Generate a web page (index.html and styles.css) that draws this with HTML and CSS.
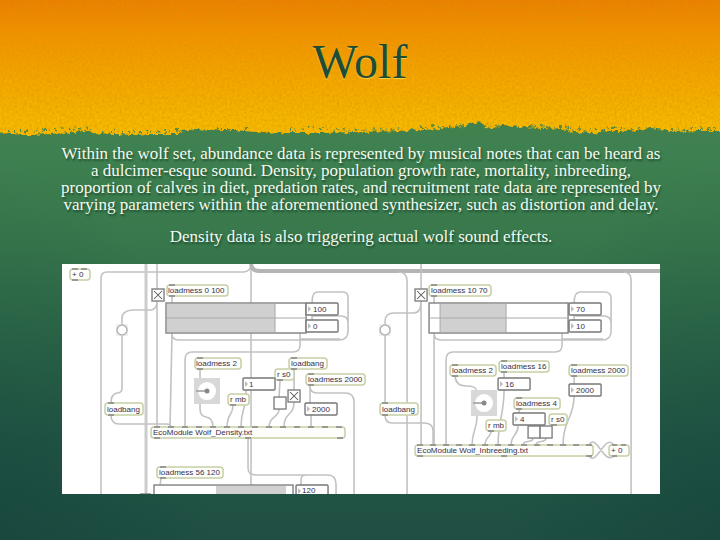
FILE: index.html
```html
<!DOCTYPE html>
<html lang="en">
<head>
<meta charset="utf-8">
<title>Wolf</title>
<link rel="stylesheet" href="styles.css">
</head>
<body>
<main class="slide">
  <header class="banner">
    <svg class="grain" aria-hidden="true">
      <filter id="weave" x="0" y="0" width="100%" height="100%">
        <feTurbulence type="fractalNoise" baseFrequency="0.4 0.36" numOctaves="3" seed="4"/>
        <feColorMatrix values="0 0 0 0 0.7  0 0 0 0 0.3  0 0 0 0 0  1.8 0 0 0 -0.66"/>
      </filter>
      <rect width="100%" height="100%" filter="url(#weave)"/>
    </svg>
    <h1 class="title">Wolf</h1>
    <svg class="torn" viewBox="0 116 720 24" preserveAspectRatio="none" aria-hidden="true">
      <filter id="rough" x="0" y="-20%" width="100%" height="140%">
        <feTurbulence type="fractalNoise" baseFrequency="0.22" numOctaves="3" seed="9"/>
        <feDisplacementMap in="SourceGraphic" scale="7" xChannelSelector="R" yChannelSelector="G"/>
      </filter>
      <g filter="url(#rough)">
        <path class="torn-fill" d="M-9 148V133L10 134 30 135 50 134 62 133 85 131 100 133 130 135 150 134 175 134 183 131 195 129 215 130 235 130 255 132 275 134 290 133 320 133 360 132 400 131 440 129 455 127 465 126 475 123 479 121 484 126 490 130 500 126 505 125 520 127 545 128 560 129 575 132 595 133 605 131 620 131 640 130 650 128 665 130 675 132 700 131 729 131V148Z"/>
        <path class="specks" d="M-4 131H22L48 130 70 128 92 129M110 131L140 132 178 131M216 129L252 129M290 130L310 127 350 130 400 129M420 128L450 126 468 124M485 124L500 126M530 126L560 127 585 130 610 128 640 128M672 130L700 128 724 130"/>
      </g>
    </svg>
  </header>
  <section class="content">
    <p class="copy">Within the wolf set, abundance data is represented by musical notes that can be heard as<br>a dulcimer-esque sound. Density, population growth rate, mortality, inbreeding,<br>proportion of calves in diet, predation rates, and recruitment rate data are represented by<br>varying parameters within the aforementioned synthesizer, such as distortion and delay.</p>
    <p class="copy">Density data is also triggering actual wolf sound effects.</p>
    <svg class="patch" viewBox="62 264 598 230" role="img" aria-label="Wolf density and inbreeding patch">
      <defs>
        <g id="cross"><rect class="toggle" width="12" height="12"/><path class="ink" d="M2 2L10 10M10 2L2 10"/></g>
        <g id="dial"><rect class="dial-bg" width="26" height="26"/><circle class="dial-face" cx="13" cy="13" r="9"/><path class="dial-hand" d="M2 13H13"/><circle class="dial-dot" cx="13" cy="13" r="2.5"/></g>
        <g id="bang"><rect class="bang-bg" x="-6" y="-6" width="12" height="12"/><circle class="bang-ring" r="5"/></g>
        <g id="num"><rect class="number" width="32" height="12" rx="1"/><path class="arrow" d="M2 3L5 6 2 9Z"/></g>
      </defs>
      <g class="cords">
        <path d="M101 494V278Q101 272 107 272H244Q251 271 251 264V485"/>
        <path class="thick" d="M146 264V494"/>
        <path class="trunk" d="M251 264Q252 271 259 271H660"/>
        <path d="M157 264V427M157 301Q157 310 150 310H132Q122 311 122 318V388Q122 393 117 393 111 394 111 403M111 415Q111 424 119 424H166Q171 424 171 427"/>
        <path d="M172 295V303M172 333L170 427M172 333Q172 340 178 340H339Q348 340 348 331V297Q348 292 342 292H317Q312 292 312 303M312 320V316H341Q348 316 348 323M300 333V345Q300 352 293 352H192Q185 352 185 360V427M300 339H340"/>
        <path d="M200 368V378M200 404V409Q200 416 206 417 213 418 213 427M233 405C233 416 227 413 227 427M246 390C246 412 241 408 241 427M280 380L279 397M279 409C279 418 269 416 269 427M294 368V390M294 402C294 416 284 412 284 427M310 385V403M310 386Q310 393 317 393H345Q354 393 354 402V494M311 415V427"/>
        <path d="M248 438V468Q248 475 256 475H328Q336 475 336 485V494M301 485V480Q301 475 306 475M161 478L160 485"/>
        <path d="M398 272Q407 272 407 281V494M421 264V445M421 301Q421 313 414 313H394Q385 313 385 321V403M385 415Q385 423 392 423H424Q433 423 433 431V445"/>
        <path d="M434 295V303M434 333V445M434 333Q434 340 441 340H602Q611 340 611 331V298Q611 292 604 292H580Q574 292 574 303M574 320V316H604Q611 316 611 324M562 333V345Q562 352 555 352H453Q446 352 446 360V445M562 339H603M623 272Q631 272 631 280V494"/>
        <path d="M455 375Q455 386 466 386 476 386 476 390M477 416C477 430 472 430 472 445M504 372V390C504 415 498 420 498 445M491 431C491 438 485 436 485 445M519 408V413M518 426C518 436 511 434 511 445M533 438C533 444 523 439 523 445M546 438C546 444 536 439 536 445M574 376V396C574 418 563 420 563 445"/>
        <path d="M589 445Q592 439 597 445L604 454Q609 460 614 456M589 456Q592 461 597 455L604 446Q609 439 614 445"/>
      </g>
      <g class="objects">
        <rect x="70" y="269" width="20" height="11" rx="3"/><rect x="167" y="285" width="61" height="11" rx="3"/><rect x="105" y="403" width="38" height="12" rx="3"/><rect x="195" y="358" width="46" height="11" rx="3"/><rect x="289" y="358" width="38" height="11" rx="3"/><rect x="275" y="369" width="19" height="11" rx="3"/><rect x="306" y="374" width="59" height="11" rx="3"/><rect x="228" y="394" width="21" height="11" rx="3"/><rect x="151" y="427" width="194" height="11" rx="3"/><rect x="157" y="467" width="66" height="11" rx="3"/>
        <rect x="429" y="285" width="62" height="11" rx="3"/><rect x="380" y="403" width="38" height="12" rx="3"/><rect x="450" y="365" width="46" height="11" rx="3"/><rect x="499" y="361" width="50" height="11" rx="3"/><rect x="569" y="365" width="59" height="11" rx="3"/><rect x="514" y="398" width="46" height="11" rx="3"/><rect x="549" y="414" width="18" height="11" rx="3"/><rect x="486" y="420" width="20" height="11" rx="3"/><rect x="415" y="445" width="178" height="11" rx="3"/><rect x="609" y="445" width="20" height="11" rx="3"/>
      </g>
      <path class="nubs" d="M72 269h6M81 269h6M72 280h6M169 285h6M169 296h6M108 403h6M108 415h6M197 358h6M197 369h6M291 358h6M291 369h6M277 380h6M308 374h6M308 385h6M230 405h6M160 467h6M160 478h6M140 494h11M431 285h6M431 296h6M382 403h6M382 415h6M452 365h6M452 376h6M501 361h6M501 372h6M571 365h6M571 376h6M516 398h6M516 409h6M551 425h6M488 431h6M612 445h5M621 445h5M612 456h5M154 438h6M245 438h6M337 438h6M417 456h6M501 456h6M586 456h6"/>
      <path class="nubs inlets" d="M154 427H345"/>
      <path class="nubs inlets right" d="M417 445H594"/>
      <g class="sliders">
        <rect x="166" y="303" width="140" height="30"/><path class="range" d="M167 304H275V332H167Z"/><path class="mid" d="M167 318H305M275 304V332"/>
        <rect x="429" y="303" width="139" height="30"/><path class="range" d="M440 304H506V332H440Z"/><path class="mid" d="M430 318H567M440 304V332M506 304V332"/>
        <rect x="154" y="485" width="139" height="30"/><path class="range" d="M216 486H286V500H216Z"/>
      </g>
      <use href="#cross" x="152" y="289"/><use href="#cross" x="288" y="390"/><use href="#cross" x="415" y="289"/>
      <rect class="toggle" x="274" y="397" width="12" height="12"/><rect class="toggle" x="528" y="426" width="12" height="12"/><rect class="toggle" x="540" y="426" width="12" height="12"/>
      <use href="#bang" x="122" y="330"/><use href="#bang" x="385" y="330"/>
      <use href="#dial" x="194" y="378"/><use href="#dial" x="471" y="390"/>
      <use href="#num" x="306" y="303"/><use href="#num" x="306" y="320"/><use href="#num" x="243" y="378"/><use href="#num" x="305" y="403"/><use href="#num" x="296" y="485"/>
      <use href="#num" x="569" y="303"/><use href="#num" x="569" y="320"/><use href="#num" x="498" y="378"/><use href="#num" x="513" y="413"/><use href="#num" x="569" y="384"/>
      <g class="labels">
        <text x="72" y="277">+ 0</text><text x="168" y="293">loadmess 0 100</text><text x="313" y="312">100</text><text x="313" y="329">0</text>
        <text x="107" y="412">loadbang</text><text x="196" y="366">loadmess 2</text><text x="291" y="366">loadbang</text><text x="277" y="377">r s0</text><text x="308" y="382">loadmess 2000</text><text x="249" y="387">1</text><text x="230" y="402">r mb</text><text x="312" y="412">2000</text><text x="153" y="435">EcoModule Wolf_Density.txt</text><text x="159" y="475">loadmess 56 120</text><text x="302" y="493">120</text>
        <text x="431" y="293">loadmess 10 70</text><text x="576" y="312">70</text><text x="576" y="329">10</text><text x="382" y="412">loadbang</text><text x="452" y="373">loadmess 2</text><text x="501" y="369">loadmess 16</text><text x="571" y="373">loadmess 2000</text><text x="505" y="387">16</text><text x="576" y="393">2000</text><text x="516" y="406">loadmess 4</text><text x="520" y="422">4</text><text x="551" y="422">r s0</text><text x="488" y="428">r mb</text><text x="417" y="453">EcoModule Wolf_Inbreeding.txt</text><text x="611" y="453">+ 0</text>
      </g>
    </svg>
  </section>
</main>
</body>
</html>
```
FILE: styles.css
```css
* { box-sizing: border-box; }
body { margin: 0; }
.slide {
  min-height: 100vh;
  overflow: hidden;
  font-family: "Palatino", "Palatino Linotype", "Liberation Serif", serif;
  background:
    radial-gradient(ellipse 30% 70% at 0 100%, rgba(15, 60, 55, .4), transparent),
    radial-gradient(ellipse 30% 70% at 100% 100%, rgba(15, 60, 55, .4), transparent),
    linear-gradient(#3f8150 0, #3f8150 140px, #38784c 240px, #2d6848 340px, #245846 440px, #1f4f43 540px);
}
.banner {
  position: relative;
  display: flex;
  flex-direction: column;
  background: linear-gradient(#ea7e00 0, #f19000 30px, #f3a500 75px, #f6b800 122px, #f7bb00 136px);
}
.grain { position: absolute; width: 100%; height: 100%; opacity: .6; }
.title {
  position: relative;
  margin: 0;
  padding-top: 34px;
  height: 116px;
  font-size: 48px;
  line-height: 56px;
  font-weight: 400;
  text-align: center;
  color: #1e4d35;
  text-shadow: 0 1px 1px rgba(255, 225, 110, .7);
}
.torn { position: relative; display: block; width: 100%; height: 24px; }
.torn-fill { fill: #3f8150; }
.specks { fill: none; stroke: #5f8a3c; stroke-width: 2; stroke-dasharray: 2 3 1 5 3 4; }
.content {
  display: flex;
  flex-direction: column;
  align-items: center;
  padding: 5px 0 40px 2px;
}
.copy {
  margin: 0 0 15px;
  font-size: 17px;
  line-height: 17px;
  text-align: center;
  white-space: nowrap;
  color: #f4faf0;
  text-shadow: 1px 2px 2px rgba(10, 45, 25, .6);
}
.copy + .copy { margin-bottom: 19px; }
.patch { display: block; width: 83.3%; background: #fff; }
.cords path { fill: none; stroke: #c2c2c2; stroke-width: 1.6; }
.cords .thick { stroke: #ccc; stroke-width: 3; }
.cords .trunk { stroke: #b5b5b5; stroke-width: 4; }
.objects rect { fill: #fdfdfb; stroke: #c6cfa5; stroke-width: 1.5; }
.nubs { stroke: #858585; stroke-width: 1.5; }
.inlets { stroke-dasharray: 6 8; }
.inlets.right { stroke-dasharray: 6 7; }
.sliders rect { fill: #fff; stroke: #888; stroke-width: 1.5; }
.sliders .range { fill: #d0d0d0; }
.sliders .mid { stroke: #aaa; fill: none; }
.toggle { fill: #fff; stroke: #808080; stroke-width: 1.4; }
.ink { stroke: #555; }
.number { fill: #fff; stroke: #777; stroke-width: 1.4; }
.arrow { fill: #bbb; }
.bang-bg { fill: #f0f0f0; }
.bang-ring { fill: #fff; stroke: #b0b0b0; stroke-width: 1.4; }
.dial-bg { fill: #d8d8d8; }
.dial-face { fill: #fff; }
.dial-hand { stroke: #999; stroke-width: 1.5; }
.dial-dot { fill: #888; }
.labels { font: 8px "Liberation Sans", Arial, sans-serif; fill: #383048; }
```
